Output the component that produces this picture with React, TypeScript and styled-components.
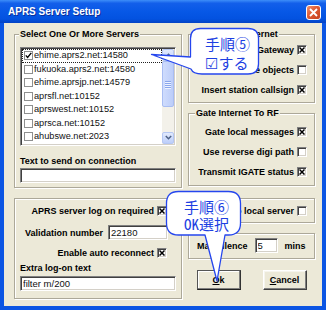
import React from "react";
import styled, { createGlobalStyle } from "styled-components";

const Global = createGlobalStyle`
  html, body { margin: 0; padding: 0; }
  body {
    width: 326px; height: 310px; overflow: hidden;
    font-family: "Liberation Sans", Arial, sans-serif;
  }
`;

const UI = `"Liberation Sans", Arial, sans-serif`;

const Window = styled.div`
  position: relative;
  width: 326px;
  height: 310px;
  display: flex;
  flex-direction: column;
`;

const TitleBar = styled.div`
  height: 23px;
  flex: none;
  display: flex;
  align-items: center;
  justify-content: space-between;
  padding: 0 5px 0 8px;
  background: linear-gradient(to bottom, #3d8ef9 0%, #135fea 14%, #0758e6 50%, #0352e0 82%, #0443c4 100%);
`;

const Title = styled.span`
  color: #fff;
  font: bold 10px/12px ${UI};
  text-shadow: 1px 1px 0 #0b2f9a;
`;

const CloseBtn = styled.div`
  width: 15px;
  height: 15px;
  margin-top: 2px;
  box-sizing: border-box;
  border: 1px solid #fff;
  border-radius: 3px;
  background: linear-gradient(135deg, #f0916e 0%, #de5a34 45%, #c5401c 100%);
  display: flex;
  align-items: center;
  justify-content: center;
`;

const Body = styled.div`
  flex: 1;
  background: #ece9d8;
  border: 4px solid #0b55e3;
  border-top: none;
  padding: 6px 7px 0 10px;
  display: grid;
  grid-template-columns: 168px 127px;
  grid-template-rows: 159px 101px;
  column-gap: 6px;
  row-gap: 10px;
  align-content: start;
`;

const Frame = styled.fieldset<{ $pad: string; $mt?: number }>`
  margin: ${(p) => p.$mt ?? 0}px 0 0 0;
  min-width: 0;
  border: 1px solid #aca899;
  box-shadow: inset 1px 1px 0 #fff, 1px 1px 0 #fff;
  padding: ${(p) => p.$pad};
  display: flex;
  flex-direction: column;
`;

const Legend = styled.legend<{ $ml?: number }>`
  padding: 0 1px;
  margin-left: ${(p) => p.$ml ?? 0}px;
  background: #ece9d8;
  font: bold 9px/10px ${UI};
  color: #000;
`;

const Column = styled.div<{ $gap: number }>`
  display: flex;
  flex-direction: column;
  gap: ${(p) => p.$gap}px;
`;

const ListBox = styled.div`
  margin-top: 4px;
  height: 100px;
  box-sizing: border-box;
  border: 1px solid;
  border-color: #808080 #fff #fff #808080;
  box-shadow: inset 1px 1px 0 #404040, inset -1px -1px 0 #d4d0c8;
  padding: 1px;
  background: #fff;
  display: flex;
`;

const Items = styled.div`
  flex: 1;
  display: flex;
  flex-direction: column;
`;

const Item = styled.div<{ $focus?: boolean }>`
  height: 13.5px;
  box-sizing: border-box;
  display: flex;
  align-items: center;
  gap: 1px;
  padding-left: 2px;
  font: 9.2px/13px ${UI};
  color: #111;
  white-space: nowrap;
  ${(p) => (p.$focus ? "outline: 1px dotted #222; outline-offset: -1px;" : "")}
`;

const ListCheck = styled.span`
  width: 9px;
  height: 9px;
  flex: none;
  box-sizing: border-box;
  border: 1px solid #8e8f8f;
  background: #fff;
  display: flex;
  align-items: center;
  justify-content: center;
`;

const ScrollBar = styled.div`
  width: 12px;
  flex: none;
  display: flex;
  flex-direction: column;
  background: #f3f1ea;
`;

const ScrollBtn = styled.div`
  height: 12px;
  flex: none;
  box-sizing: border-box;
  border: 1px solid #b5c7f3;
  border-radius: 2px;
  background: linear-gradient(to bottom, #e2eafd, #bccefa);
  display: flex;
  align-items: center;
  justify-content: center;
`;

const Track = styled.div`
  flex: 1;
  display: flex;
  flex-direction: column;
`;

const Thumb = styled.div`
  height: 46px;
  box-sizing: border-box;
  border: 1px solid #a8bdf3;
  border-radius: 2px;
  background: linear-gradient(to right, #cfdcfd, #bccdf9);
  display: flex;
  flex-direction: column;
  align-items: center;
  justify-content: center;
  gap: 1px;
`;

const Grip = styled.span`
  width: 6px;
  height: 1px;
  background: #8aa6ec;
  box-shadow: 0 1px 0 #eef3ff;
`;

const Label = styled.div<{ $mt: number }>`
  margin-top: ${(p) => p.$mt}px;
  font: bold 9px/10px ${UI};
  color: #000;
  white-space: nowrap;
`;

const TextField = styled.input<{ $w?: number; $mt?: number }>`
  margin: ${(p) => p.$mt ?? 0}px 0 0 0;
  width: ${(p) => (p.$w ? `${p.$w}px` : "100%")};
  height: 15px;
  flex: none;
  box-sizing: border-box;
  border: 1px solid;
  border-color: #808080 #fff #fff #808080;
  box-shadow: inset 1px 1px 0 #404040, inset -1px -1px 0 #d4d0c8;
  padding: 0 2px;
  background: #fff;
  font: 9.5px/13px ${UI};
  color: #111;
  outline: none;
`;

const CheckRow = styled.div<{ $h: number; $pr?: number; $mt?: number }>`
  height: ${(p) => p.$h}px;
  margin-top: ${(p) => p.$mt ?? 0}px;
  padding-right: ${(p) => p.$pr ?? 0}px;
  display: flex;
  align-items: center;
  justify-content: flex-end;
  gap: 3px;
  font: bold 9px/10px ${UI};
  color: #000;
  white-space: nowrap;
`;

const XBox = styled.span`
  width: 10px;
  height: 10px;
  flex: none;
  box-sizing: border-box;
  border: 1px solid;
  border-color: #808080 #fff #fff #808080;
  box-shadow: inset 1px 1px 0 #404040, inset -1px -1px 0 #d4d0c8;
  background: #fff;
  display: flex;
  align-items: center;
  justify-content: center;
`;

const FieldRow = styled.div<{ $mt: number; $pl: number; $gap: number }>`
  margin-top: ${(p) => p.$mt}px;
  padding-left: ${(p) => p.$pl}px;
  display: flex;
  align-items: center;
  gap: ${(p) => p.$gap}px;
  font: bold 9px/10px ${UI};
  color: #000;
  white-space: nowrap;
`;

const ButtonRow = styled.div`
  margin-top: 11px;
  display: flex;
  justify-content: center;
  gap: 22px;
`;

const Button = styled.div<{ $default?: boolean }>`
  width: 44px;
  height: 20px;
  box-sizing: border-box;
  border: 1px solid;
  border-color: ${(p) => (p.$default ? "#555 #333 #222 #555" : "#fff #404040 #404040 #fff")};
  box-shadow: inset -1px -1px 0 #808080, inset 1px 1px 0 ${(p) => (p.$default ? "#fff" : "#f6f5ee")};
  background: #ece9d8;
  display: flex;
  align-items: center;
  justify-content: center;
  font: bold 9px/10px ${UI};
  color: #000;
`;

const CalloutBox = styled.div<{ $l: number; $t: number; $w: number; $h: number }>`
  position: absolute;
  left: ${(p) => p.$l}px;
  top: ${(p) => p.$t}px;
  width: ${(p) => p.$w}px;
  height: ${(p) => p.$h}px;
  pointer-events: none;
`;

const CalloutShape = styled.svg`
  position: absolute;
  left: 0;
  top: 0;
  overflow: visible;
`;

const CalloutText = styled.div<{ $tx: number; $ty: number; $lh: number }>`
  position: absolute;
  left: ${(p) => p.$tx}px;
  top: ${(p) => p.$ty}px;
  font-family: "Noto Sans CJK JP", "DejaVu Sans", sans-serif;
  font-size: 15px;
  line-height: ${(p) => p.$lh}px;
  color: #1d3fe2;
  white-space: nowrap;
  font-feature-settings: "hwid" 1;
`;

const Tick = () => (
  <svg width="7" height="7" viewBox="0 0 7 7">
    <path d="M0.8 3.4 L2.6 5.4 L6.3 0.9" fill="none" stroke="#000" strokeWidth="1.4" />
  </svg>
);

const XMark = () => (
  <svg width="6" height="6" viewBox="0 0 6 6">
    <path d="M0.5 0.5 L5.5 5.5 M5.5 0.5 L0.5 5.5" stroke="#000" strokeWidth="1.5" />
  </svg>
);

const Check = ({ on }: { on: boolean }) => <XBox>{on ? <XMark /> : null}</XBox>;

const Chevron = ({ up }: { up: boolean }) => (
  <svg width="7" height="5" viewBox="0 0 7 5">
    <path
      d={up ? "M0.8 4 L3.5 1.3 L6.2 4" : "M0.8 1 L3.5 3.7 L6.2 1"}
      fill="none"
      stroke="#4d6185"
      strokeWidth="1.5"
    />
  </svg>
);

const servers = [
  "ehime.aprs2.net:14580",
  "fukuoka.aprs2.net:14580",
  "ehime.aprsjp.net:14579",
  "aprsfl.net:10152",
  "aprswest.net:10152",
  "aprsca.net:10152",
  "ahubswe.net:2023",
];

type CalloutProps = {
  l: number; t: number; w: number; h: number;
  d: string; tx: number; ty: number; lh: number; lines: string[];
};

const Callout = ({ l, t, w, h, d, tx, ty, lh, lines }: CalloutProps) => (
  <CalloutBox $l={l} $t={t} $w={w} $h={h}>
    <CalloutShape width={w} height={h} viewBox={`0 0 ${w} ${h}`}>
      <path d={d} fill="#fff" stroke="#2546ee" strokeWidth="1.3" strokeLinejoin="round" />
    </CalloutShape>
    <CalloutText $tx={tx} $ty={ty} $lh={lh}>
      {lines.map((s) => (
        <div key={s}>{s}</div>
      ))}
    </CalloutText>
  </CalloutBox>
);

export default function App() {
  return (
    <Window>
      <Global />
      <TitleBar>
        <Title>APRS Server Setup</Title>
        <CloseBtn>
          <svg width="9" height="9" viewBox="0 0 9 9">
            <path d="M1 1 L8 8 M8 1 L1 8" stroke="#fff" strokeWidth="1.8" />
          </svg>
        </CloseBtn>
      </TitleBar>
      <Body>
        <Frame $pad="4px 5px 7px 5px">
          <Legend $ml={-1}>Select One Or More Servers</Legend>
          <ListBox>
            <Items>
              {servers.map((s, i) => (
                <Item key={s} $focus={i === 0}>
                  <ListCheck>{i === 0 ? <Tick /> : null}</ListCheck>
                  {s}
                </Item>
              ))}
            </Items>
            <ScrollBar>
              <ScrollBtn>
                <Chevron up />
              </ScrollBtn>
              <Track>
                <Thumb>
                  <Grip />
                  <Grip />
                  <Grip />
                  <Grip />
                </Thumb>
              </Track>
              <ScrollBtn>
                <Chevron up={false} />
              </ScrollBtn>
            </ScrollBar>
          </ListBox>
          <Label $mt={10}>Text to send on connection</Label>
          <TextField readOnly defaultValue="" $mt={2} />
        </Frame>

        <Column $gap={5}>
          <Frame $pad="1px 7px 2px 5px">
            <Legend $ml={0}>Gate RF To Internet</Legend>
            <CheckRow $h={20}>
              Enable Gateway <Check on />
            </CheckRow>
            <CheckRow $h={20}>
              Gate objects <Check on={false} />
            </CheckRow>
            <CheckRow $h={20}>
              Insert station callsign <Check on />
            </CheckRow>
          </Frame>
          <Frame $pad="4px 7px 3px 5px">
            <Legend $ml={1}>Gate Internet To RF</Legend>
            <CheckRow $h={20}>
              Gate local messages <Check on />
            </CheckRow>
            <CheckRow $h={20}>
              Use reverse digi path <Check on={false} />
            </CheckRow>
            <CheckRow $h={20}>
              Transmit IGATE status <Check on />
            </CheckRow>
          </Frame>
        </Column>

        <Frame $pad="5px 5px 7px 5px">
          <CheckRow $h={14} $pr={9}>
            APRS server log on required <Check on />
          </CheckRow>
          <FieldRow $mt={7} $pl={5} $gap={5}>
            Validation number
            <TextField readOnly defaultValue="22180" $w={60} />
          </FieldRow>
          <CheckRow $h={14} $pr={9} $mt={6}>
            Enable auto reconnect <Check on />
          </CheckRow>
          <Label $mt={3}>Extra log-on text</Label>
          <TextField readOnly defaultValue="filter m/200" $mt={3} />
        </Frame>

        <Column $gap={0}>
          <Frame $pad="5px 7px 4px 5px">
            <CheckRow $h={14}>
              Connect to local server <Check on={false} />
            </CheckRow>
          </Frame>
          <Frame $pad="4px 0 5px 8px" $mt={10}>
            <FieldRow $mt={0} $pl={0} $gap={7}>
              Max silence
              <TextField readOnly defaultValue="5" $w={23} />
              mins
            </FieldRow>
          </Frame>
          <ButtonRow>
            <Button $default>
              <u>O</u>k
            </Button>
            <Button>
              <u>C</u>ancel
            </Button>
          </ButtonRow>
        </Column>
      </Body>

      <Callout
        l={148}
        t={26}
        w={112}
        h={52}
        d="M52.5,2.5 H100 Q110.5,2.5 110.5,12.5 V38 Q110.5,48 100,48 H54 Q45,48 43,43 L3.5,28.5 L42.5,31 V12.5 Q42.5,2.5 52.5,2.5 Z"
        tx={57}
        ty={7.5}
        lh={19}
        lines={["手順⑤", "☑する"]}
      />
      <Callout
        l={162}
        t={188}
        w={84}
        h={96}
        d="M16.5,3.5 H66.5 Q78.5,3.5 78.5,15.5 V35 Q78.5,47 66.5,47 H63 L55,93 L43,47 H16.5 Q4.5,47 4.5,35 V15.5 Q4.5,3.5 16.5,3.5 Z"
        tx={22}
        ty={9.5}
        lh={17}
        lines={["手順⑥", "OK選択"]}
      />
    </Window>
  );
}
